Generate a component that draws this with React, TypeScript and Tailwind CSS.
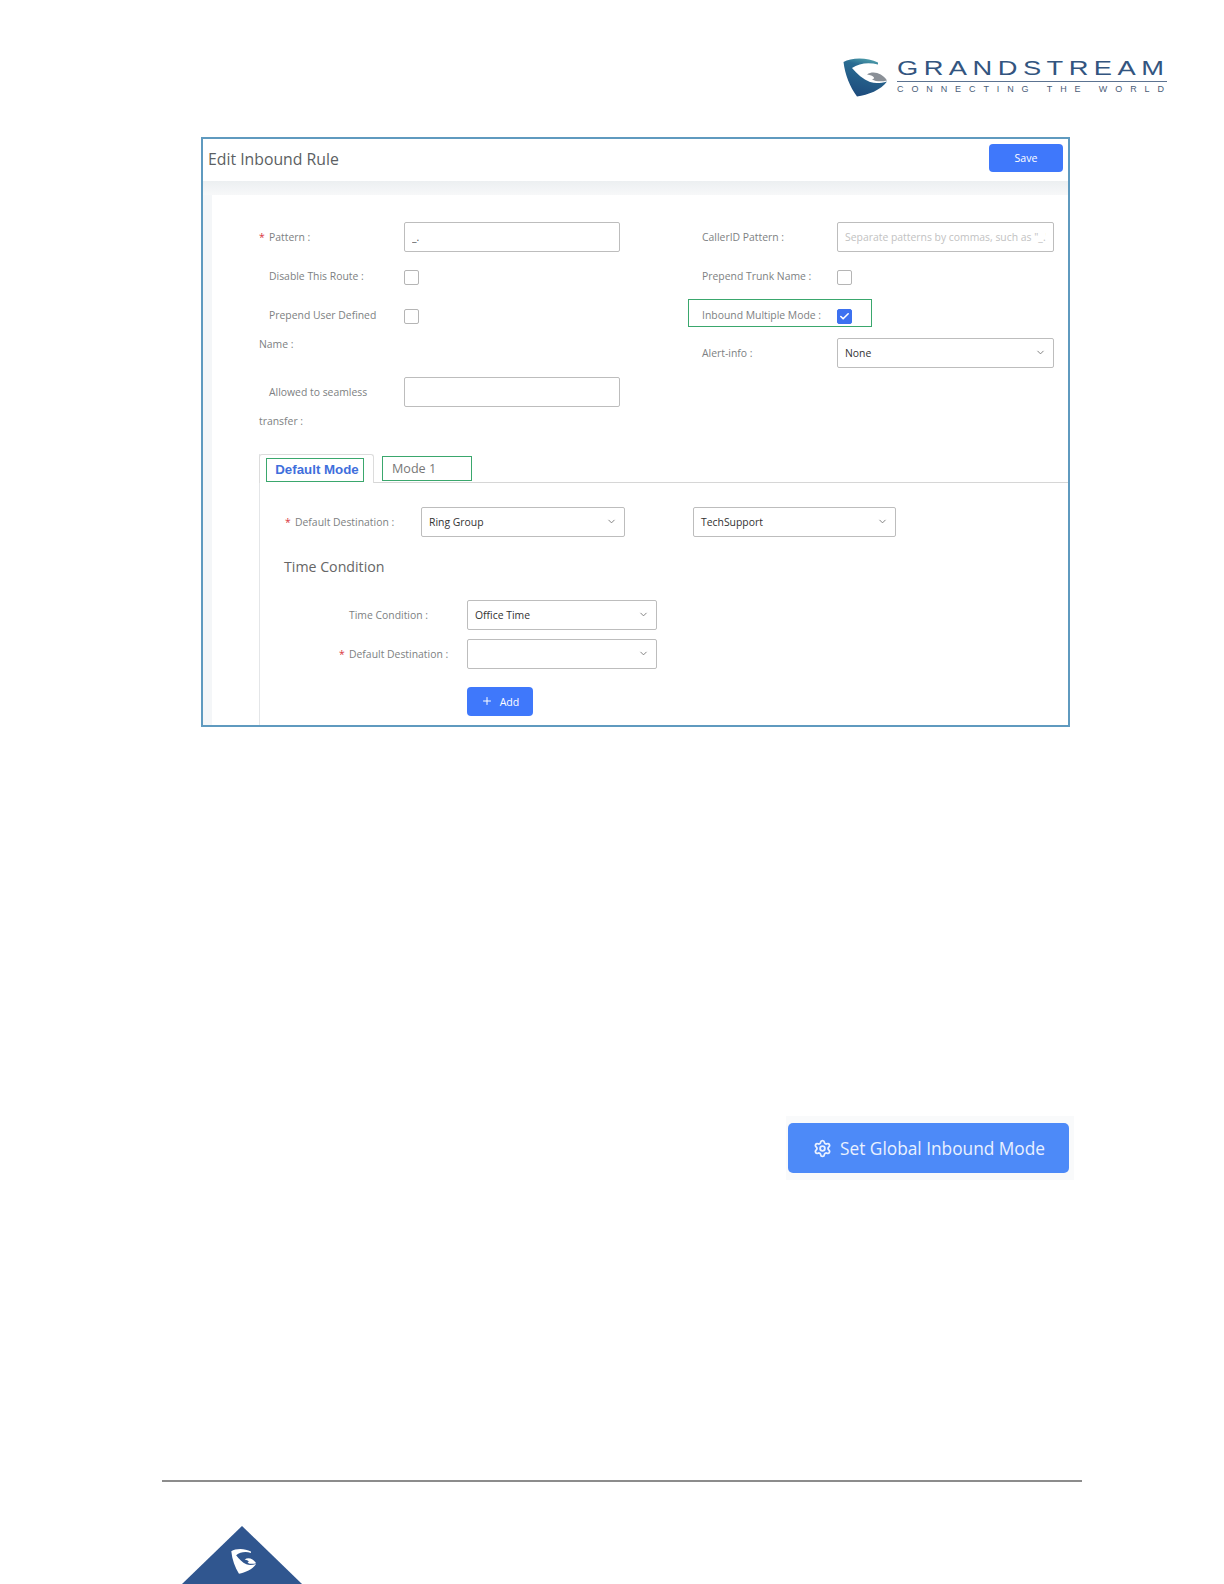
import React from 'react';
import { Check, ChevronDown, Plus, Settings } from 'lucide-react';

const SHIELD = 'M0.5 5 C8 0.5 24 0 35 5.5 L35 7.5 C26 5 16 6 9 11 C14 17 20 22 27 25 C33 27 38 26 44 24.5 C38 33 25 38 14 39.5 C7 30 2 18 0.5 5 Z';
const SWOOSH = 'M24 17.5 C30 13.5 39 16 44 23.5 C38 25 33 24.5 29 22.5 C33 21.5 31 18.5 24 17.5 Z';

const Label = ({ text, required }: { text: string; required?: boolean }) => (
  <span className="block text-[10.4px] leading-4 text-[#7d7f82] whitespace-nowrap">
    {required && <span className="inline-block w-[10px] -ml-[10px] text-[#d9363e]">*</span>}
    {text}
  </span>
);

const Checkbox = ({ checked }: { checked?: boolean }) => (
  <span
    className={`flex items-center justify-center w-[15px] h-[15px] rounded-[2px] border ${
      checked ? 'bg-[#3d71f0] border-[#3d71f0]' : 'bg-white border-[#b5b5b5]'
    }`}
  >
    {checked && <Check size={11} strokeWidth={3.5} className="text-white" />}
  </span>
);

const TextBox = ({ value, placeholder, width }: { value?: string; placeholder?: string; width: string }) => (
  <input
    readOnly
    value={value ?? ''}
    placeholder={placeholder}
    className={`h-[30px] px-[7px] rounded-[2px] border border-[#bdbdbd] bg-white text-[10.4px] text-[#555] placeholder:text-[#c2c2c2] outline-none ${width}`}
  />
);

const Select = ({ value, width }: { value?: string; width: string }) => (
  <div className={`flex items-center justify-between h-[30px] pl-[7px] pr-[7px] rounded-[2px] border border-[#bdbdbd] bg-white ${width}`}>
    <span className="pt-[3px] text-[10.4px] text-[#333]">{value}</span>
    <ChevronDown size={11} className="text-[#777]" />
  </div>
);

const BlueButton = ({ children, size }: { children: React.ReactNode; size: string }) => (
  <button className={`flex items-center justify-center gap-[7px] rounded-[4px] bg-[#3f78fb] text-white text-[10.6px] font-medium ${size}`}>
    {children}
  </button>
);

const LeftColumn = () => (
  <div className="flex flex-col w-[476px] pl-[47px] pt-[27px]">
    <div className="flex items-center h-[30px]">
      <div className="w-[145px] pl-[10px]"><Label text="Pattern :" required /></div>
      <TextBox value="_." width="w-[216px]" />
    </div>
    <div className="flex items-center h-[15px] mt-[18px]">
      <div className="w-[145px] pl-[10px] -mt-[3px]"><Label text="Disable This Route :" /></div>
      <Checkbox />
    </div>
    <div className="flex items-center h-[15px] mt-[24px]">
      <div className="w-[145px] pl-[10px] -mt-[3px]"><Label text="Prepend User Defined" /></div>
      <Checkbox />
    </div>
    <div className="h-4 mt-[12px]"><Label text="Name :" /></div>
    <div className="flex items-center h-[30px] mt-[25px]">
      <div className="w-[145px] pl-[10px]"><Label text="Allowed to seamless" /></div>
      <TextBox width="w-[216px]" />
    </div>
    <div className="h-4 mt-[6px]"><Label text="transfer :" /></div>
  </div>
);

const RightColumn = () => (
  <div className="flex flex-col pl-[14px] pt-[27px]">
    <div className="flex items-center h-[30px]">
      <div className="w-[135px]"><Label text="CallerID Pattern :" /></div>
      <TextBox placeholder={'Separate patterns by commas, such as "_."'} width="w-[217px]" />
    </div>
    <div className="flex items-center h-[15px] mt-[18px]">
      <div className="w-[135px] -mt-[3px]"><Label text="Prepend Trunk Name :" /></div>
      <Checkbox />
    </div>
    <div className="flex items-start w-[184px] h-[28px] mt-[14px] -ml-[14px] pl-[13px] pt-[9px] border border-[#3aa76d]">
      <div className="w-[135px] -mt-[2px]"><Label text="Inbound Multiple Mode :" /></div>
      <Checkbox checked />
    </div>
    <div className="flex items-center h-[30px] mt-[11px]">
      <div className="w-[135px]"><Label text="Alert-info :" /></div>
      <Select value="None" width="w-[217px]" />
    </div>
  </div>
);

const ModePanel = () => (
  <div className="ml-[47px] mt-[25px] flex-1 border-l border-[#e4e6e8]">
    <div className="flex h-[29px] border-b border-[#d6d6d6]">
      <div className="w-[115px] h-[29px] -ml-[1px] pl-[6px] pt-[3px] bg-white border border-b-0 border-[#dcdcdc] rounded-t-[3px]">
        <div className="flex items-center justify-center w-[98px] h-[24px] pl-[4px] border border-[#3aa76d] font-['Liberation_Sans'] font-bold text-[13.3px] text-[#3f6fdc]">
          Default Mode
        </div>
      </div>
      <div className="flex items-center w-[90px] h-[25px] ml-[8px] mt-[2px] pl-[9px] pt-[3px] border border-[#3aa76d] text-[12.6px] text-[#777]">
        Mode 1
      </div>
    </div>
    <div className="flex items-center mt-[24px] pl-[35px]">
      <div className="w-[126px]"><Label text="Default Destination :" required /></div>
      <Select value="Ring Group" width="w-[204px]" />
      <div className="w-[68px]" />
      <Select value="TechSupport" width="w-[203px]" />
    </div>
    <div className="h-[22px] mt-[19px] pl-[24px] text-[14.2px] leading-[22px] text-[#666]">Time Condition</div>
    <div className="flex items-center mt-[22px] pl-[89px]">
      <div className="w-[118px]"><Label text="Time Condition :" /></div>
      <Select value="Office Time" width="w-[190px]" />
    </div>
    <div className="flex items-center mt-[9px] pl-[89px]">
      <div className="w-[118px]"><Label text="Default Destination :" required /></div>
      <Select width="w-[190px]" />
    </div>
    <div className="mt-[18px] pl-[207px]">
      <BlueButton size="w-[66px] h-[29px] pt-[3px]">
        <Plus size={12} className="-mt-[3px]" />
        Add
      </BlueButton>
    </div>
  </div>
);

const InboundRuleCard = () => (
  <div className="flex flex-col w-[869px] h-[592px] ml-[201px] border-2 border-[#5f9abf] overflow-hidden">
    <div className="flex items-center justify-between shrink-0 h-[42px] pl-[5px] pr-[5px] bg-white">
      <h1 className="text-[15.8px] text-[#5c5f63]">Edit Inbound Rule</h1>
      <BlueButton size="w-[74px] h-[28px] mb-[4px] pt-[3px]">Save</BlueButton>
    </div>
    <div className="shrink-0 h-[14px] bg-gradient-to-b from-[#eceff1] to-[#f7f8f9]" />
    <div className="flex flex-1 min-h-0">
      <div className="w-[9px] bg-[#f4f6f8]" />
      <div className="flex flex-col flex-1 bg-white">
        <div className="flex">
          <LeftColumn />
          <RightColumn />
        </div>
        <ModePanel />
      </div>
    </div>
  </div>
);

const Logo = () => (
  <div className="flex items-start h-[137px] pl-[843px] pt-[57px]">
    <svg width="44" height="40" viewBox="0 0 44 40">
      <defs>
        <linearGradient id="shield" x1="0.6" y1="0" x2="0.3" y2="1">
          <stop offset="0" stopColor="#4fa0ab" />
          <stop offset="0.22" stopColor="#2a6c92" />
          <stop offset="1" stopColor="#1d4a7c" />
        </linearGradient>
      </defs>
      <path d={SHIELD} fill="url(#shield)" />
      <path d={SWOOSH} fill="#8a9097" />
    </svg>
    <div className="flex flex-col ml-[10px] mt-[1px] w-[270px]">
      <span className="origin-left scale-x-[1.3] font-['Liberation_Sans'] text-[21px] leading-[19px] tracking-[4.2px] whitespace-nowrap text-[#33557f]">GRANDSTREAM</span>
      <span className="h-px mt-[4px] bg-[#5c7391]" />
      <span className="font-['Liberation_Sans'] text-[9px] leading-[10px] mt-[2px] tracking-[7.9px] whitespace-nowrap text-[#4a5d78]">CONNECTING THE WORLD</span>
    </div>
  </div>
);

export default function App() {
  return (
    <div className="flex flex-col w-[1224px] h-[1584px] overflow-hidden bg-white font-['Open_Sans',sans-serif]">
      <Logo />
      <InboundRuleCard />
      <div className="self-end w-[288px] mt-[389px] mr-[150px] pl-[2px] pr-[5px] py-[7px] bg-[#f9fafb]">
        <button className="flex items-center w-[281px] h-[50px] pl-[25px] pt-[2px] gap-[8px] rounded-[5px] bg-[#4d8af8] text-[17.3px] text-[#eaf1ff]">
          <Settings size={19} strokeWidth={2.3} className="-mt-[2px]" />
          Set Global Inbound Mode
        </button>
      </div>
      <div className="w-[920px] h-[2px] ml-[162px] mt-[300px] bg-[#8c8c8c]" />
      <div className="ml-[182px] mt-[44px] w-[120px] h-[58px]">
        <svg width="120" height="58" viewBox="0 0 120 58">
          <polygon points="60,0 120,58 0,58" fill="#30568f" />
          <g transform="translate(49 22) scale(0.57 0.65)">
            <path d={SHIELD} fill="#ffffff" />
            <path d={SWOOSH} fill="#ffffff" />
          </g>
        </svg>
      </div>
    </div>
  );
}
